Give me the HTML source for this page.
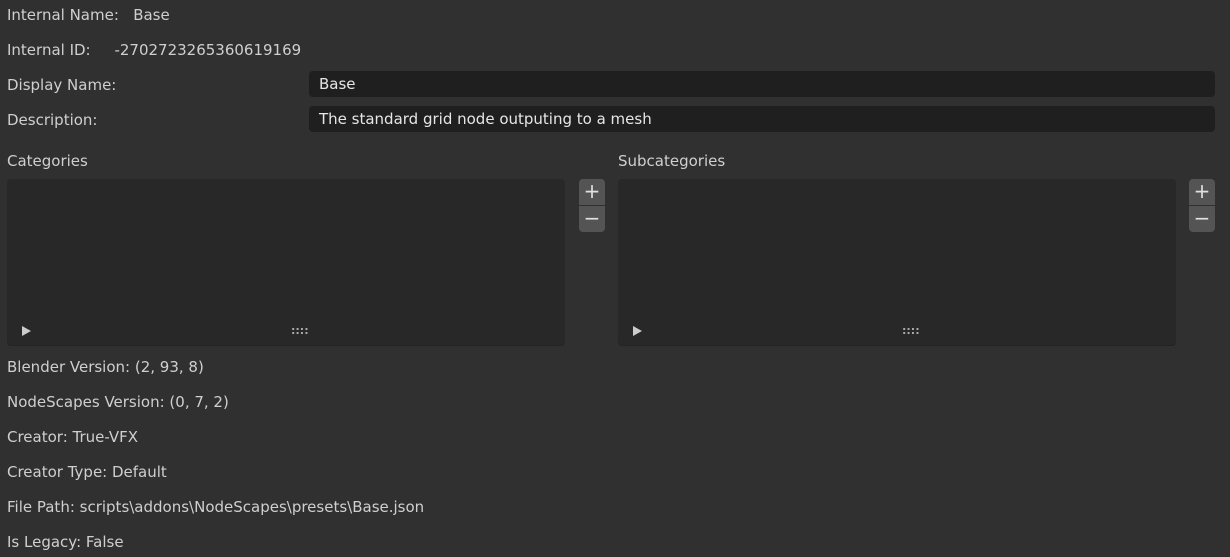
<!DOCTYPE html>
<html><head><style>
body{margin:0;width:1230px;height:557px;background:#303030;font-family:"DejaVu Sans","Liberation Sans",sans-serif;font-size:15px;color:#cfcfcf;position:relative;overflow:hidden}
.t{position:absolute;left:7px;line-height:20px;white-space:pre}
.in{position:absolute;left:309px;width:906px;height:26px;background:#1f1f1f;border-radius:4px;box-sizing:border-box;padding-left:10px;line-height:27px;color:#e6e6e6}
.list{position:absolute;top:179px;height:166px;width:558px;background:#282828;border-radius:4px;box-shadow:0 1px 0 #232323}
.btn{position:absolute;width:26px;height:26px;background:#545454;color:#e0e0e0;text-align:center;line-height:25px;font-size:20px}
.tri{position:absolute;left:15px;top:147px;width:0;height:0;border-left:9px solid #ccc;border-top:5px solid transparent;border-bottom:5px solid transparent}
.grip{position:absolute;left:284px;top:145px;font-size:11px;color:#aaa;font-weight:bold}
</style></head><body>
<div class="t" style="top:5px">Internal Name:   Base</div>
<div class="t" style="top:40px">Internal ID:     -2702723265360619169</div>
<div class="t" style="top:75px">Display Name:</div>
<div class="t" style="top:110px">Description:</div>
<div class="in" style="top:71px">Base</div>
<div class="in" style="top:106px">The standard grid node outputing to a mesh</div>
<div class="t" style="top:151px">Categories</div>
<div class="t" style="top:151px;left:618px">Subcategories</div>
<div class="list" style="left:7px"><div class="tri"></div><div class="grip">::::</div></div>
<div class="list" style="left:618px"><div class="tri"></div><div class="grip">::::</div></div>
<div class="btn" style="left:579px;top:179px;border-radius:4px 4px 0 0">+</div>
<div class="btn" style="left:579px;top:206px;border-radius:0 0 4px 4px">−</div>
<div class="btn" style="left:1189px;top:179px;border-radius:4px 4px 0 0">+</div>
<div class="btn" style="left:1189px;top:206px;border-radius:0 0 4px 4px">−</div>
<div class="t" style="top:357px">Blender Version: (2, 93, 8)</div>
<div class="t" style="top:392px">NodeScapes Version: (0, 7, 2)</div>
<div class="t" style="top:427px">Creator: True-VFX</div>
<div class="t" style="top:462px">Creator Type: Default</div>
<div class="t" style="top:497px">File Path: scripts\addons\NodeScapes\presets\Base.json</div>
<div class="t" style="top:532px">Is Legacy: False</div>
</body></html>
